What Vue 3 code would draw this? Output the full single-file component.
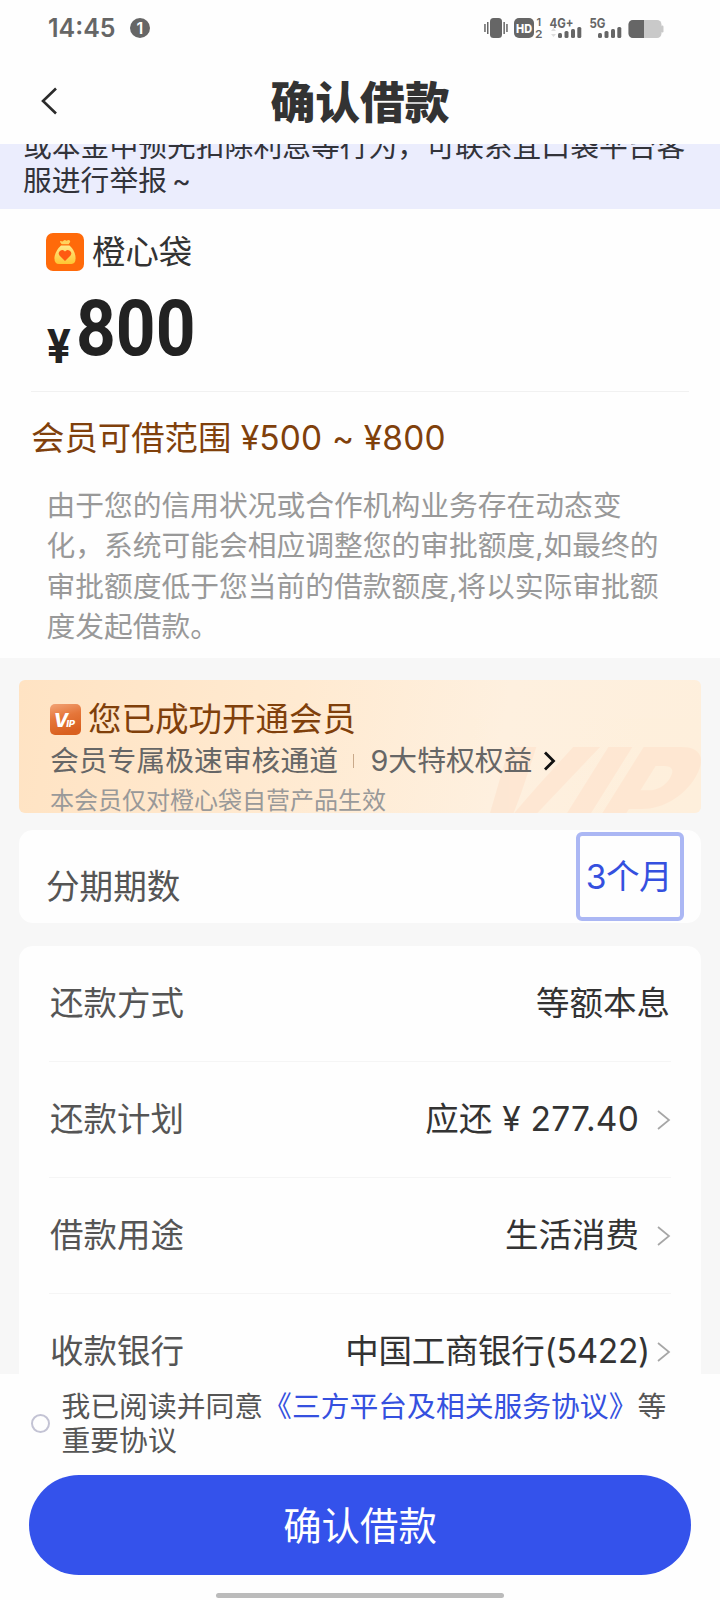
<script setup>
const notice = [
  '或本金中预先扣除利息等行为，可联系宜口袋平台客',
  '服进行举报 ~',
]
const tips = [
  '由于您的信用状况或合作机构业务存在动态变',
  '化，系统可能会相应调整您的审批额度,如最终的',
  '审批额度低于您当前的借款额度,将以实际审批额',
  '度发起借款。',
]
const rows = [
  { label: '还款方式', value: '等额本息', arrow: false },
  { label: '还款计划', value: '应还 ¥ 277.40', arrow: true, money: true },
  { label: '借款用途', value: '生活消费', arrow: true },
  { label: '收款银行', value: '中国工商银行(5422)', arrow: true, tight: true },
]
</script>

<template>
  <div class="screen">
    <header class="status">
      <span class="time">14:45</span>
      <span class="badge">1</span>
      <svg class="status-icons" width="184" height="24" viewBox="0 0 184 24">
        <g fill="#666">
          <rect x="10" y="2" width="12" height="20" rx="3.5" />
          <rect x="4.2" y="8" width="1.5" height="8" />
          <rect x="7" y="6" width="1.5" height="12" />
          <rect x="23.4" y="6" width="1.5" height="12" />
          <rect x="26.2" y="8" width="1.5" height="8" />
          <rect x="34" y="2" width="20" height="20" rx="5" />
          <rect x="78" y="17" width="4" height="5" rx="1.5" />
          <rect x="84.5" y="15" width="4" height="7" rx="1.5" />
          <rect x="91" y="13" width="4" height="9" rx="1.5" />
          <rect x="97.3" y="11" width="4" height="11" rx="1.5" />
          <rect x="118" y="17" width="4" height="5" rx="1.5" />
          <rect x="124.5" y="15" width="4" height="7" rx="1.5" />
          <rect x="131" y="13" width="4" height="9" rx="1.5" />
          <rect x="137.3" y="11" width="4" height="11" rx="1.5" />
        </g>
        <path d="M71 15l2.5-3 2.5 3zM71 18h5l-2.5 3z" fill="#ddd" />
        <rect x="148.5" y="4" width="33" height="18" rx="4.5" fill="#c9c9c9" />
        <rect x="181" y="9.5" width="2.5" height="7" rx="1.2" fill="#c9c9c9" />
        <path d="M164 4h-11a4.500 4.500 0 0 0-4.500 4.500v9a4.500 4.500 0 0 0 4.500 4.500h11z" fill="#666" />
        <text x="36" y="16.5" class="hd" textLength="16" lengthAdjust="spacingAndGlyphs">HD</text>
        <text x="56.5" y="10" class="mini">1</text>
        <text x="55" y="22" class="mini" textLength="7.5" lengthAdjust="spacingAndGlyphs">2</text>
        <text x="69.5" y="12" class="net" textLength="24" lengthAdjust="spacingAndGlyphs">4G+</text>
        <text x="109.5" y="12" class="net" textLength="16" lengthAdjust="spacingAndGlyphs">5G</text>
      </svg>
    </header>

    <nav class="nav">
      <svg class="back" width="18" height="30" viewBox="0 0 18 30">
        <path d="M16 2.500L3 15l13 12.500" fill="none" stroke="#2b2b2b" stroke-width="2.600" />
      </svg>
      <h1>确认借款</h1>
    </nav>

    <div class="notice">
      <div v-for="line in notice" :key="line" class="notice-line">{{ line }}</div>
    </div>

    <section class="loan">
      <div class="brand">
        <svg width="38" height="38" viewBox="0 0 38 38">
          <defs>
            <linearGradient id="bag" x1="0" y1="0" x2="0" y2="1">
              <stop offset="0" stop-color="#ffe98a" />
              <stop offset="1" stop-color="#ffc531" />
            </linearGradient>
          </defs>
          <rect width="38" height="38" rx="7" fill="#ff6a0a" />
          <path d="M14 9q0-1.500 1.500-.8l1 .3q2-2.300 3-1.300q1 .8 1.500.3q2-1 3 .3q.8 1-.8 2.500l-.5 1h-7z" fill="#ffd35e" />
          <path d="M15 12.500h8.500q5.500 5 6 11.500q.5 7-4 7h-12.500q-5 0-4.500-7q1-6.500 6.500-11.500z" fill="url(#bag)" />
          <path d="M19 28l-5.500-5.500a3.400 3.400 0 0 1 5.500-4a3.400 3.400 0 0 1 5.500 4z" fill="#ff5a12" />
        </svg>
        <span>橙心袋</span>
      </div>
      <div class="amount">
        <span class="yen">¥</span>
        <span class="num">800</span>
      </div>
      <div class="range">会员可借范围 <span>¥500 ~ ¥800</span></div>
      <div class="tips">
        <div v-for="line in tips" :key="line">{{ line }}</div>
      </div>
    </section>

    <main class="body">
      <section class="vip">
        <span class="watermark">VIP</span>
        <div class="vip-title">
          <svg width="31" height="31" viewBox="0 0 31 31">
            <defs>
              <linearGradient id="vipbg" x1="0" y1="0" x2="0.300" y2="1">
                <stop offset="0" stop-color="#f2a477" />
                <stop offset="0.500" stop-color="#e5763a" />
                <stop offset="1" stop-color="#d9601f" />
              </linearGradient>
            </defs>
            <rect width="31" height="31" rx="5" fill="url(#vipbg)" />
            <text x="3.500" y="22.500" class="v-icon">V<tspan class="v-small" dx="-2">IP</tspan></text>
          </svg>
          <span>您已成功开通会员</span>
        </div>
        <div class="vip-sub">
          <span>会员专属极速审核通道</span>
          <i class="bar"></i>
          <span>9大特权权益</span>
          <svg width="13" height="20" viewBox="0 0 13 20">
            <path d="M2 1.500L10.500 10L2 18.500" fill="none" stroke="#111" stroke-width="2.800" />
          </svg>
        </div>
        <div class="vip-note">本会员仅对橙心袋自营产品生效</div>
      </section>

      <section class="card term">
        <span>分期期数</span>
        <button class="term-btn">3个月</button>
      </section>

      <section class="card list">
        <div v-for="row in rows" :key="row.label" class="row">
          <span class="label">{{ row.label }}</span>
          <span class="value" :class="{ tight: row.tight, plain: !row.arrow, money: row.money }">{{ row.value }}</span>
          <svg v-if="row.arrow" width="14" height="20" viewBox="0 0 14 20">
            <path d="M1 1L12 10L1 19" fill="none" stroke="#a6a6a6" stroke-width="1.700" />
          </svg>
        </div>
      </section>
    </main>

    <footer class="footer">
      <div class="agree">
        <i class="radio"></i>
        <div class="agree-text">
          <div>我已阅读并同意<a>《三方平台及相关服务协议》</a>等</div>
          <div>重要协议</div>
        </div>
      </div>
      <button class="submit">确认借款</button>
      <i class="home"></i>
    </footer>
  </div>
</template>

<style>
body {
  background: #fff;
}
</style>

<style scoped>
.screen {
  width: 720px;
  height: 1600px;
  overflow: hidden;
  background: #fefefe;
  color: #333;
  font-family: Inter, "Noto Sans CJK SC", sans-serif;
  font-weight: 370;
  display: flex;
  flex-direction: column;
  white-space: nowrap;
  text-spacing-trim: space-all;
}
button {
  font-family: inherit;
  font-weight: inherit;
  padding: 0;
  border: 0;
}
.status {
  height: 56px;
  flex: none;
  display: flex;
  align-items: center;
  padding-left: 48px;
  color: #666;
}
.time {
  width: 82px;
  font-size: 25px;
  font-weight: 600;
  line-height: 56px;
}
.badge {
  width: 20px;
  height: 20px;
  border-radius: 50%;
  background: #666;
  color: #fff;
  font-size: 16px;
  font-weight: 600;
  line-height: 20px;
  text-align: center;
}
.status-icons {
  margin-left: 330px;
}
.status-icons text {
  font-family: Inter, sans-serif;
  font-weight: 700;
  fill: #666;
}
.status-icons .hd {
  fill: #fff;
  font-size: 12px;
  font-weight: 800;
}
.status-icons .mini {
  font-size: 11px;
  font-weight: 600;
}
.status-icons .net {
  font-size: 13.500px;
}
.nav {
  height: 88px;
  flex: none;
  display: flex;
  align-items: center;
  padding-left: 40px;
}
.back {
  margin-bottom: -1px;
}
h1 {
  margin: 7px 0 0;
  width: 604px;
  text-align: center;
  font-size: 44.800px;
  font-weight: 900;
  line-height: 81px;
  color: #333;
}
.notice {
  height: 65px;
  flex: none;
  overflow: hidden;
  background: #ebedfd;
  color: #32333a;
  padding-left: 23px;
  box-sizing: border-box;
  font-size: 28.800px;
  word-spacing: -3px;
}
.notice-line {
  line-height: 34px;
}
.notice-line:first-child {
  margin-top: -14px;
}
.loan {
  height: 449px;
  flex: none;
  overflow: hidden;
}
.brand {
  display: flex;
  align-items: center;
  gap: 8px;
  padding: 24px 0 0 46px;
  height: 38px;
  font-size: 33.400px;
  line-height: 36px;
}
.amount {
  height: 120px;
  margin: 0 31px;
  border-bottom: 1px solid #f1f1f1;
  padding-left: 15px;
  display: flex;
  align-items: baseline;
  color: #222;
  font-family: Roboto, sans-serif;
  font-weight: 700;
}
.yen {
  width: 31px;
  font-size: 48px;
  line-height: 100px;
  transform: translate(1px, 8px) scaleX(0.920);
  transform-origin: left;
}
.num {
  font-size: 78px;
  line-height: 115px;
  transform: translateX(-1px) scaleX(0.890);
  transform-origin: left;
}
.range {
  height: 90px;
  line-height: 92px;
  padding-left: 31px;
  font-size: 33.400px;
  color: #80400b;
}
.range span {
  letter-spacing: 0.200px;
}
.tips {
  padding-left: 46.500px;
  font-size: 28.750px;
  line-height: 40.300px;
  color: #999;
  margin-top: 4px;
}
.body {
  height: 716px;
  flex: none;
  overflow: hidden;
  background: #f7f7f7;
  padding: 22px 19px 0;
  box-sizing: border-box;
  display: flex;
  flex-direction: column;
}
.vip {
  position: relative;
  height: 133px;
  flex: none;
  border-radius: 6px;
  overflow: hidden;
  background: linear-gradient(100deg, #ffe3c3 0%, #ffead1 40%, #fef0df 70%, #feefdc 100%);
  padding-left: 31px;
}
.watermark {
  position: absolute;
  left: 460px;
  top: 51px;
  font-size: 121px;
  font-weight: 900;
  line-height: 120px;
  transform: skewX(-32deg);
  color: #fde2cc;
  opacity: 0.600;
}
.vip-title {
  position: relative;
  display: flex;
  align-items: center;
  gap: 7px;
  height: 32px;
  margin-top: 23px;
  font-size: 33.500px;
  line-height: 32px;
  color: #80400b;
}
.v-icon {
  fill: #fff;
  font-style: italic;
  font-weight: 800;
  font-size: 19px;
}
.v-small {
  font-size: 9.500px;
}
.vip-sub {
  position: relative;
  display: flex;
  align-items: center;
  height: 40px;
  margin-top: 6px;
  font-size: 28.800px;
  line-height: 40px;
  color: #666;
}
.bar {
  width: 1.500px;
  height: 14px;
  margin: 0 16px 0 15px;
  background: #c9a98a;
}
.vip-sub svg {
  margin-left: 11px;
}
.vip-note {
  position: relative;
  font-size: 24px;
  line-height: 39px;
  color: #999;
}
.card {
  background: #fefefe;
  border-radius: 14px;
  flex: none;
}
.term {
  margin-top: 17px;
  height: 93px;
  display: flex;
  justify-content: space-between;
  padding: 0 17px 0 27px;
  font-size: 33.600px;
  color: #555;
}
.term > span {
  line-height: 114px;
}
.term-btn {
  box-sizing: border-box;
  width: 108px;
  height: 89px;
  margin-top: 2px;
  border: 4px solid #abb7f4;
  border-radius: 6px;
  background: #fefefe;
  color: #3550df;
  font-size: 33.600px;
  line-height: 79px;
  letter-spacing: -0.500px;
  text-indent: -2px;
}
.list {
  margin-top: 23px;
  padding: 0 30px;
  height: 460px;
}
.row {
  height: 115px;
  border-bottom: 1px solid #f5f5f5;
  display: flex;
  align-items: center;
  font-size: 33.500px;
  line-height: 113px;
}
.label {
  flex: 1;
  color: #555;
  padding-left: 1px;
}
.value {
  margin-right: 18px;
}
.value.money {
  letter-spacing: 0.200px;
}
.value.tight {
  margin-right: 7px;
  letter-spacing: -0.300px;
}
.value.plain {
  margin-right: 1px;
}
.footer {
  height: 226px;
  flex: none;
  background: #fefefe;
}
.agree {
  display: flex;
  align-items: center;
  height: 101px;
  padding-left: 31px;
}
.radio {
  box-sizing: border-box;
  width: 19px;
  height: 19px;
  border: 2px solid #c3c3d4;
  border-radius: 50%;
  margin: -3px 11.500px 0 0;
}
.agree-text {
  font-size: 28.800px;
  line-height: 34px;
  color: #555;
  margin-top: -1px;
}
.agree-text a {
  color: #3550df;
}
.submit {
  display: block;
  width: 662px;
  height: 100px;
  margin: 0 auto;
  border-radius: 50px;
  background: #3452eb;
  color: #fff;
  font-size: 38.400px;
  line-height: 102px;
}
.home {
  display: block;
  width: 288px;
  height: 5px;
  margin: 18px auto 0;
  border-radius: 3px;
  background: #bbb;
}
</style>
